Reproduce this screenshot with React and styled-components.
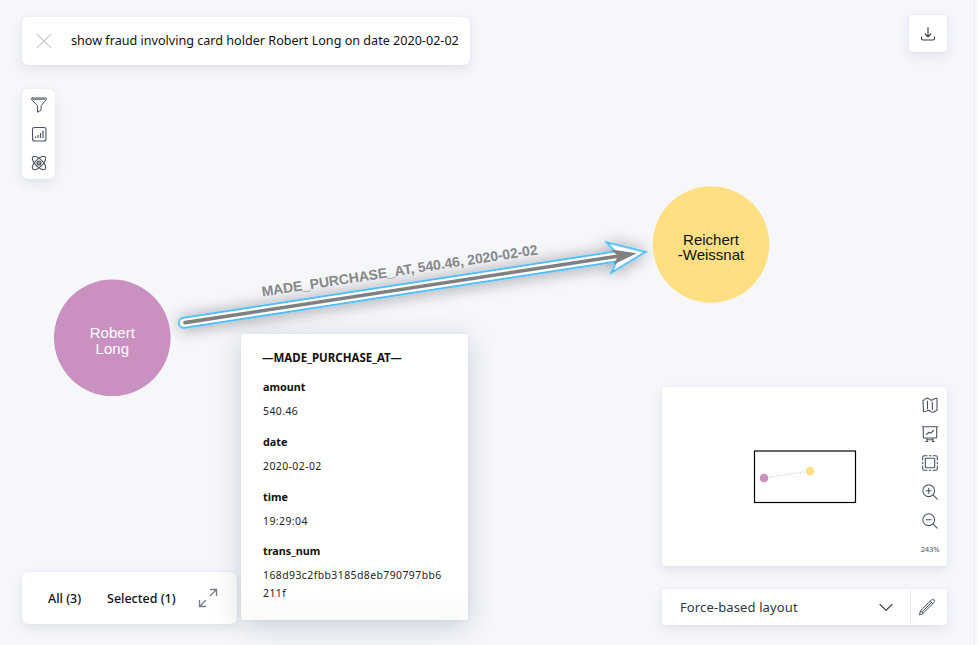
import React from 'react';
import styled, { createGlobalStyle } from 'styled-components';

const GlobalStyle = createGlobalStyle`
  *, *::before, *::after { box-sizing: border-box; }
  body { margin: 0; background: #f8f9fc; overflow: hidden; }
  button { border: 0; padding: 0; background: none; font: inherit; color: inherit; }
`;

const Page = styled.main`
  position: relative;
  display: flex;
  justify-content: space-between;
  width: 975px;
  height: 645px;
  padding: 15px 27px 20px 22px;
  background: #f5f7fb;
  border-right: 1px solid #eaecf4;
  font-family: 'Noto Sans', 'Open Sans', sans-serif;
  color: #111;
`;

const Canvas = styled.svg`
  position: absolute;
  inset: 0;
  font-family: 'Liberation Sans', Arial, sans-serif;
`;

const Column = styled.div`
  position: relative;
  display: flex;
  flex-direction: column;
  align-items: ${(p) => p.$align || 'flex-start'};
`;

const Panel = styled.section`
  display: flex;
  align-items: center;
  background: #fff;
  border-radius: ${(p) => p.$radius || 6}px;
  box-shadow: 0 4px 12px rgba(40, 50, 70, 0.1), 0 0 2px rgba(40, 50, 70, 0.06);
`;

const SearchBar = styled(Panel)`
  width: 448px;
  height: 48px;
  margin-top: 2px;
  padding-left: 14px;
  gap: 19px;
`;

const Query = styled.span`
  font-size: 12.6px;
  line-height: 20px;
  letter-spacing: ${(p) => p.$tracking || 0}px;
  white-space: nowrap;
`;

const ToolStrip = styled(Panel)`
  flex-direction: column;
  width: 33px;
  height: 90px;
  margin-top: 24px;
  padding-top: 7px;
  gap: 11px;
`;

const Tabs = styled(Panel)`
  width: 215px;
  height: 52px;
  margin-top: auto;
  margin-bottom: 1px;
  padding-left: 26px;
`;

const Tab = styled.button`
  width: ${(p) => p.$width}px;
  text-align: left;
  font-size: 12.5px;
  font-weight: 500;
  letter-spacing: ${(p) => p.$tracking || 0}px;
  white-space: nowrap;
`;

const DownloadButton = styled(Panel)`
  width: 38px;
  height: 37px;
  justify-content: center;
`;

const MiniMap = styled(Panel)`
  width: 285px;
  height: 179px;
  margin-top: auto;
  align-items: stretch;
  justify-content: flex-end;
`;

const Overview = styled.svg`
  flex: 1;
  min-width: 0;
`;

const MapTools = styled.div`
  display: flex;
  flex-direction: column;
  align-items: center;
  width: 34px;
  padding-top: 9px;
  gap: 11px;
`;

const ZoomLevel = styled.span`
  margin-top: 2px;
  font-size: 7.6px;
  line-height: 12px;
  letter-spacing: -0.15px;
  color: #4b5563;
`;

const LayoutBar = styled(Panel)`
  width: 285px;
  height: 36px;
  margin-top: 23px;
`;

const LayoutSelect = styled.button`
  display: flex;
  flex: 1;
  align-items: center;
  justify-content: space-between;
  height: 100%;
  padding: 0 17px 0 18px;
  font-size: 13px;
  letter-spacing: 0.12px;
  color: #303640;
`;

const EditButton = styled.button`
  display: flex;
  align-items: center;
  justify-content: center;
  width: 37px;
  height: 34px;
  padding-right: 4px;
  border-left: 1px solid #eaedf5;
`;

const Glyph = styled.svg`
  display: block;
  flex: none;
  width: ${(p) => p.$size || 18}px;
  height: ${(p) => p.$size || 18}px;
  fill: none;
  stroke: ${(p) => p.$color || '#4b5362'};
  stroke-width: ${(p) => p.$stroke || 1.1};
  stroke-linecap: round;
  stroke-linejoin: round;
`;

const Popover = styled.article`
  position: absolute;
  left: 241px;
  top: 334px;
  width: 227px;
  height: 286px;
  padding: 15px 20px 0 22px;
  border-radius: 3px;
  background: linear-gradient(#fff 255px, #fafafa);
  box-shadow: 0 6px 28px rgba(50, 65, 85, 0.22), 0 0 2px rgba(50, 65, 85, 0.08);
`;

const Heading = styled.h1`
  margin: 0 0 12px -1px;
  font-size: 11.5px;
  line-height: 17px;
  font-weight: 700;
  letter-spacing: ${(p) => p.$tracking || 0}px;
  white-space: nowrap;
`;

const Fields = styled.dl`
  margin: 0;
`;

const FieldName = styled.dt`
  font-size: 10.8px;
  line-height: 18px;
  font-weight: 700;
`;

const FieldValue = styled.dd`
  margin: 7px 0 12px;
  width: 182px;
  font-size: 10.4px;
  line-height: 17.8px;
  letter-spacing: 0.45px;
  color: #222;
  word-break: break-all;
`;

const fields = [
  ['amount', '540.46'],
  ['date', '2020-02-02'],
  ['time', '19:29:04'],
  ['trans_num', '168d93c2fbb3185d8eb790797bb6211f'],
];

const CloseIcon = () => (
  <Glyph viewBox="0 0 18 18" $size={16} $color="#c3c4c6" $stroke={1.3}>
    <path d="M1.5 1.5l15 15M16.500 1.500l-15 15" />
  </Glyph>
);

const FilterIcon = () => (
  <Glyph viewBox="0 0 18 18">
    <path d="M2.200 2h13.600q1.300 .2 .5 1.700l-5.200 6.100v4.200l-3.600 2.300V9.800L1.700 3.700Q1 2.200 2.200 2zM3 3.200h12" strokeWidth="1" />
  </Glyph>
);

const StatsIcon = () => (
  <Glyph viewBox="0 0 18 18">
    <rect x="2.500" y="2.500" width="13.500" height="13.500" rx="2" />
    <path d="M5.500 13v-1.500M8 13v-3M10.500 13V8M13 13V5.500" strokeWidth="1.200" strokeLinecap="butt" />
  </Glyph>
);

const AtomIcon = () => (
  <Glyph viewBox="0 0 18 18">
    <ellipse cx="9" cy="9" rx="8.700" ry="3.700" transform="rotate(45 9 9)" />
    <ellipse cx="9" cy="9" rx="8.700" ry="3.700" transform="rotate(-45 9 9)" />
    <circle cx="9" cy="9" r="2" fill="#9298a4" />
  </Glyph>
);

const DownloadIcon = () => (
  <Glyph viewBox="0 0 18 18" $color="#343a46">
    <path d="M9 2.500v9M6.200 9L9 11.800 11.800 9M2.500 12v1.500q0 1.500 1.500 1.500h10q1.500 0 1.500-1.500V12" />
  </Glyph>
);

const ExpandIcon = () => (
  <Glyph viewBox="0 0 20 20" $size={20} $color="#747c87" $stroke={1.3}>
    <path d="M12 8l6.500-6.500M12 1.500h6.500V8M8 12l-6.500 6.500M1.500 12v6.500H8" strokeLinecap="butt" strokeLinejoin="miter" />
  </Glyph>
);

const MapIcon = () => (
  <Glyph viewBox="0 0 18 18">
    <path d="M2 4.500Q4 3.500 5.500 2.200q1.300-.4 2.500 .7l1.500 1q1.300 .6 2.500-.4 2.500-1.500 4-1.300v12q-2.200 1.200-3.700 2-1.300 .4-2.800-.8-1.500-1.500-3-.8-1.500 1-4 1.200zM6.500 5.300v7.400M11.300 6v7.500" />
  </Glyph>
);

const BoardIcon = () => (
  <Glyph viewBox="0 0 18 18">
    <path d="M1.300 1.800h15.400M2.300 2v10q0 1 1 1h11.400q1 0 1-1V2M6 13.200v3.300M12 13.200v3.300M6 14.800h6M4.700 16.500h2M11.300 16.500h2M5.500 9.300l2.500-2 1.500 1L12.500 5.500" />
  </Glyph>
);

const FitIcon = () => (
  <Glyph viewBox="0 0 18 18">
    <rect x="4.300" y="4.300" width="9.400" height="9.400" rx="1" />
    <path d="M1.700 6V3.200q0-1.500 1.500-1.500H6M12 1.700h2.800q1.500 0 1.500 1.500V6M16.300 12v2.800q0 1.500-1.500 1.500H12M6 16.300H3.200q-1.500 0-1.500-1.500V12M8.200 1.700h1.600M8.200 16.300h1.600M1.700 8.200v1.600M16.300 8.200v1.600" />
  </Glyph>
);

const ZoomIcon = ({ plus }) => (
  <Glyph viewBox="0 0 18 18">
    <circle cx="7.700" cy="7.700" r="5.900" />
    <path d="M12.200 12.200l4 4M5.200 7.700h5" />
    {plus && <path d="M7.700 5.200v5" />}
  </Glyph>
);

const ChevronIcon = () => (
  <Glyph viewBox="0 0 14 14" $size={14} $color="#303640" $stroke={1.2}>
    <path d="M1 4.300l6 6 6-6" />
  </Glyph>
);

const PencilIcon = () => (
  <Glyph viewBox="0 0 18 18">
    <path d="M1.500 16.500l1-3.700L13.300 2q1.500-1.200 2.800 0 1 1.400-.2 2.600L5 15.400zM2.500 12.800L5 15.400M12.200 3.200l2.600 2.600M4.300 13.700l8.600-8.600" strokeWidth="1" />
  </Glyph>
);

function GraphCanvas() {
  return (
    <Canvas width="974" height="645" viewBox="0 0 974 645">
      <defs>
        <filter id="glow" x="-30" y="-60" width="540" height="120" filterUnits="userSpaceOnUse">
          <feDropShadow dx="0" dy="1" stdDeviation="8" floodColor="#000" floodOpacity="0.38" />
        </filter>
      </defs>
      <g transform="translate(184 322.800) rotate(-8.730)">
        <path
          d="M0-5.100H437L430-15.300 467 0 430 15.300 437 5.100H0A5.100 5.100 0 0 1 0-5.100z"
          fill="#fff"
          stroke="#4dbff9"
          strokeWidth="2"
          filter="url(#glow)"
        />
        <path d="M1 0H445" stroke="#808080" strokeWidth="3.600" strokeLinecap="round" />
        <path d="M433.500-7.500L458 0 433.500 7.500 439 0z" fill="#808080" />
        <text x="221" y="-14" textAnchor="middle" textLength="279" fontSize="14" fontWeight="700" fill="#888">
          MADE_PURCHASE_AT, 540.46, 2020-02-02
        </text>
      </g>
      <circle cx="112.300" cy="337.800" r="58.300" fill="#c990c0" />
      <g fontSize="15" textAnchor="middle" fill="#fff">
        <text x="112.300" y="338">Robert</text>
        <text x="112.300" y="354">Long</text>
      </g>
      <circle cx="711" cy="244.500" r="58.300" fill="#ffdf81" />
      <g fontSize="15" textAnchor="middle" fill="#111">
        <text x="711" y="244.500">Reichert</text>
        <text x="711" y="259.500">-Weissnat</text>
      </g>
    </Canvas>
  );
}

export default function App() {
  return (
    <>
      <GlobalStyle />
      <Page>
        <GraphCanvas />
        <Column>
          <SearchBar>
            <CloseIcon />
            <Query>show fraud involving card holder Robert Long on date 2020-02-02</Query>
          </SearchBar>
          <ToolStrip>
            <FilterIcon />
            <StatsIcon />
            <AtomIcon />
          </ToolStrip>
          <Tabs>
            <Tab $width={59}>All (3)</Tab>
            <Tab $width={91}>Selected (1)</Tab>
            <ExpandIcon />
          </Tabs>
        </Column>
        <Column $align="flex-end">
          <DownloadButton $radius={3}>
            <DownloadIcon />
          </DownloadButton>
          <MiniMap $radius={3}>
            <Overview viewBox="0 0 251 179">
              <rect x="92.500" y="64" width="101" height="51.500" fill="none" stroke="#000" strokeWidth="1.200" />
              <path d="M102 91L148 84" stroke="#c8c8c8" strokeDasharray="1.500 1.500" />
              <circle cx="102" cy="91" r="4.300" fill="#c990c0" />
              <circle cx="148" cy="84" r="4.300" fill="#ffdf81" />
            </Overview>
            <MapTools>
              <MapIcon />
              <BoardIcon />
              <FitIcon />
              <ZoomIcon plus />
              <ZoomIcon />
              <ZoomLevel>243%</ZoomLevel>
            </MapTools>
          </MiniMap>
          <LayoutBar $radius={3}>
            <LayoutSelect>
              Force-based layout
              <ChevronIcon />
            </LayoutSelect>
            <EditButton>
              <PencilIcon />
            </EditButton>
          </LayoutBar>
        </Column>
        <Popover>
          <Heading>—MADE_PURCHASE_AT—</Heading>
          <Fields>
            {fields.map(([name, value]) => (
              <React.Fragment key={name}>
                <FieldName>{name}</FieldName>
                <FieldValue>{value}</FieldValue>
              </React.Fragment>
            ))}
          </Fields>
        </Popover>
      </Page>
    </>
  );
}
